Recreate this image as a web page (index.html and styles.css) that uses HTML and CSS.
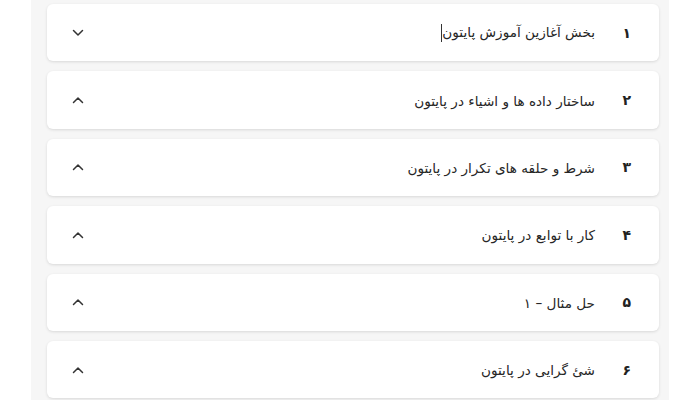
FILE: index.html
```html
<!DOCTYPE html>
<html lang="fa" dir="rtl">
<head>
<meta charset="utf-8">
<link rel="stylesheet" href="styles.css">
</head>
<body>
<div class="panel">
  <div class="card">
    <span class="num">۱</span>
    <span class="title">بخش آغازین آموزش پایتون<span class="caret"></span></span>
    <svg class="chev" viewBox="0 0 12 8" width="12" height="8"><path d="M1.5 1.5 L6 6 L10.5 1.5" fill="none" stroke="#333" stroke-width="1.5" stroke-linecap="round" stroke-linejoin="round"/></svg>
  </div>
  <div class="card">
    <span class="num">۲</span>
    <span class="title">ساختار داده ها و اشیاء در پایتون</span>
    <svg class="chev" viewBox="0 0 12 8" width="12" height="8"><path d="M1.5 6.5 L6 2 L10.5 6.5" fill="none" stroke="#333" stroke-width="1.5" stroke-linecap="round" stroke-linejoin="round"/></svg>
  </div>
  <div class="card">
    <span class="num">۳</span>
    <span class="title">شرط و حلقه های تکرار در پایتون</span>
    <svg class="chev" viewBox="0 0 12 8" width="12" height="8"><path d="M1.5 6.5 L6 2 L10.5 6.5" fill="none" stroke="#333" stroke-width="1.5" stroke-linecap="round" stroke-linejoin="round"/></svg>
  </div>
  <div class="card">
    <span class="num">۴</span>
    <span class="title">کار با توابع در پایتون</span>
    <svg class="chev" viewBox="0 0 12 8" width="12" height="8"><path d="M1.5 6.5 L6 2 L10.5 6.5" fill="none" stroke="#333" stroke-width="1.5" stroke-linecap="round" stroke-linejoin="round"/></svg>
  </div>
  <div class="card">
    <span class="num">۵</span>
    <span class="title">حل مثال – ۱</span>
    <svg class="chev" viewBox="0 0 12 8" width="12" height="8"><path d="M1.5 6.5 L6 2 L10.5 6.5" fill="none" stroke="#333" stroke-width="1.5" stroke-linecap="round" stroke-linejoin="round"/></svg>
  </div>
  <div class="card">
    <span class="num">۶</span>
    <span class="title">شئ گرایی در پایتون</span>
    <svg class="chev" viewBox="0 0 12 8" width="12" height="8"><path d="M1.5 6.5 L6 2 L10.5 6.5" fill="none" stroke="#333" stroke-width="1.5" stroke-linecap="round" stroke-linejoin="round"/></svg>
  </div>
</div>
</body>
</html>
```
FILE: styles.css
```css
html, body {
  margin: 0;
  padding: 0;
  background: #ffffff;
  height: 400px;
  overflow: hidden;
}
body {
  font-family: "DejaVu Sans", "Noto Sans", sans-serif;
  color: #222;
}
.panel {
  margin: 0 31px;
  background: #f6f6f6;
  padding: 4px 10px 0 16px;
  display: flex;
  flex-direction: column;
  gap: 10px;
  height: 400px;
  box-sizing: border-box;
}
.card {
  background: #fff;
  border-radius: 6px;
  box-shadow: 0 1px 3px rgba(0,0,0,0.12);
  height: 57.4px;
  flex: none;
  display: flex;
  align-items: center;
  padding: 0 28px 0 25px;
  box-sizing: border-box;
}
.num {
  width: 36px;
  font-size: 14px;
  font-weight: bold;
  color: #222;
}
.title {
  font-size: 13.6px;
  color: #262626;
  padding-top: 1px;
}
.caret {
  display: inline-block;
  width: 1px;
  height: 18px;
  background: #333;
  vertical-align: middle;
}
.chev {
  margin-right: auto;
}
```
